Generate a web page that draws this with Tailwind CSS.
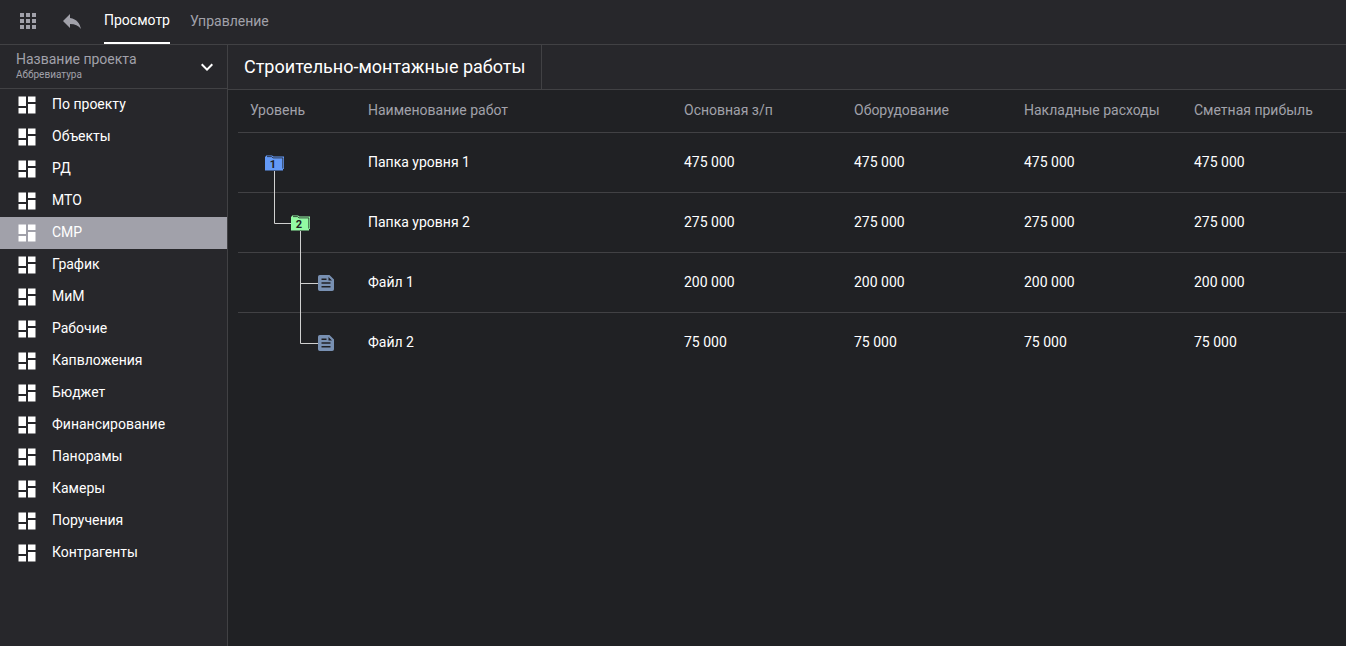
<!DOCTYPE html>
<html lang="ru">
<head>
<meta charset="utf-8">
<title>Строительно-монтажные работы</title>
<script src="https://cdn.jsdelivr.net/npm/@tailwindcss/browser@4"></script>
</head>
<body class="h-screen overflow-hidden bg-[#202124] font-[Roboto,sans-serif] text-sm font-normal text-white">
<svg class="hidden">
  <symbol id="dash" viewBox="0 0 24 24"><path fill="currentColor" d="M3.500 13H11V3.500H3.500zM3.500 20.600H11V15H3.500zM13 20.600h7.500V11H13zM13 3.500V9h7.500V3.500z"/></symbol>
  <symbol id="file" viewBox="0 0 16 16"><path fill="#7890b2" fill-rule="evenodd" d="M1.800 0H11.500l4.500 4.500v9.700a1.800 1.800 0 0 1-1.800 1.800H1.800A1.800 1.800 0 0 1 0 14.200V1.800A1.800 1.800 0 0 1 1.800 0ZM3.500 3.400V5H8.500V3.400ZM3.500 7.200V8.800H12.500V7.200ZM3.500 11V12.600H12.500V11ZM10.500 2V5.500H14Z"/></symbol>
  <symbol id="folder" viewBox="0 0 19 16"><path fill="currentColor" d="M0 1.500H1V.5H7L8.500 1.500H19V14H18V15.500H0Z"/><path fill="none" stroke="#202124" stroke-width=".8" d="M2 1.600H6.500L8 2.900H17.800V13.500"/></symbol>
</svg>
<div class="flex h-full flex-col">
  <header class="flex h-[45px] shrink-0 border-b border-[#414144] bg-[#27272b] text-[#a1a1aa]">
    <svg class="mt-[13px] ml-5 size-4" viewBox="0 0 16 16" fill="currentColor"><path d="M0 0h4v4H0zM6 0h4v4H6zM12 0h4v4h-4zM0 6h4v4H0zM6 6h4v4H6zM12 6h4v4h-4zM0 12h4v4H0zM6 12h4v4H6zM12 12h4v4h-4z"/></svg>
    <svg class="mt-[9px] ml-6 size-6" viewBox="0 0 24 24" fill="currentColor"><path d="M10 9V5l-7 7 7 7v-4.100c5 0 8.500 1.600 11 5.100-1-5-4-10-11-11z"/></svg>
    <nav class="ml-5 flex gap-5 leading-10">
      <a class="h-11 w-[66px] border-b-2 border-white text-white">Просмотр</a>
      <a class="h-11 pt-px">Управление</a>
    </nav>
  </header>
  <div class="flex min-h-0 flex-1">
    <aside class="flex w-[228px] shrink-0 flex-col border-r border-[#414144] bg-[#27272b]">
      <div class="flex h-11 items-center justify-between border-b border-[#414144] pr-2 pl-4 text-[#a1a1aa]">
        <div class="pb-[3px]"><div class="leading-5">Название проекта</div><div class="text-[10px] leading-3">Аббревиатура</div></div>
        <svg class="size-6 text-white" viewBox="0 0 24 24" fill="currentColor"><path d="M7.410 8.590 12 13.170l4.590-4.580L18 10l-6 6-6-6 1.410-1.410z"/></svg>
      </div>
      <ul id="menu"></ul>
    </aside>
    <main class="min-w-0 flex-1">
      <div class="flex h-[45px] border-b border-[#414144] bg-[#27272b]">
        <h1 class="w-[314px] shrink-0 border-r border-[#414144] pl-4 text-lg leading-[44px] whitespace-nowrap">Строительно-монтажные работы</h1>
      </div>
      <div id="table" class="ml-2.5">
        <div class="grid h-[43px] grid-cols-[118px_316px_170px_170px_170px_170px] border-b border-[#414144] leading-[41px] whitespace-nowrap text-[#a1a1aa]">
          <div class="pl-3">Уровень</div><div class="pl-3">Наименование работ</div><div class="pl-3">Основная з/п</div><div class="pl-3">Оборудование</div><div class="pl-3">Накладные расходы</div><div class="pl-3">Сметная прибыль</div>
        </div>
      </div>
    </main>
  </div>
</div>
<script>
const items = ['По проекту','Объекты','РД','МТО','СМР','График','МиМ','Рабочие','Капвложения','Бюджет','Финансирование','Панорамы','Камеры','Поручения','Контрагенты'];
document.getElementById('menu').innerHTML = items.map(t =>
  `<li class="flex h-8 items-center gap-[13px] pl-[15px] ${t === 'СМР' ? 'bg-[#a1a1aa]' : ''}"><svg class="size-6"><use href="#dash"/></svg><span class="pb-0.5 leading-5">${t}</span></li>`).join('');

const folder = (x, n, color) => `<use href="#folder" x="${x}" y="22" width="19" height="16" class="${color}"/><text x="${x + 8}" y="35" text-anchor="middle" fill="#202124" class="text-[11px] font-bold">${n}</text>`;
const file = '<use href="#file" x="80" y="22" width="16" height="16"/>';
const line = d => `<path d="${d}" fill="none" stroke="#d0d0d0"/>`;
const rows = [
  ['Папка уровня 1', '475 000', line('M36.5 38V60') + folder(27, 1, 'text-[#6399f6]')],
  ['Папка уровня 2', '275 000', line('M36.5 0V30.5H53M62.5 38V60') + folder(53, 2, 'text-[#93f9a3]')],
  ['Файл 1', '200 000', line('M62.5 0V60M62.5 30.5H80') + file],
  ['Файл 2', '75 000', line('M62.5 0V30.5H80') + file],
];
document.getElementById('table').insertAdjacentHTML('beforeend', rows.map(([name, sum, tree]) =>
  `<div class="grid h-[60px] grid-cols-[118px_316px_170px_170px_170px_170px] border-b border-[#414144] leading-[58px] whitespace-nowrap last:border-b-0"><svg class="h-[60px] w-[118px]">${tree}</svg><div class="pl-3">${name}</div>${`<div class="pl-3">${sum}</div>`.repeat(4)}</div>`).join(''));
</script>
</body>
</html>
